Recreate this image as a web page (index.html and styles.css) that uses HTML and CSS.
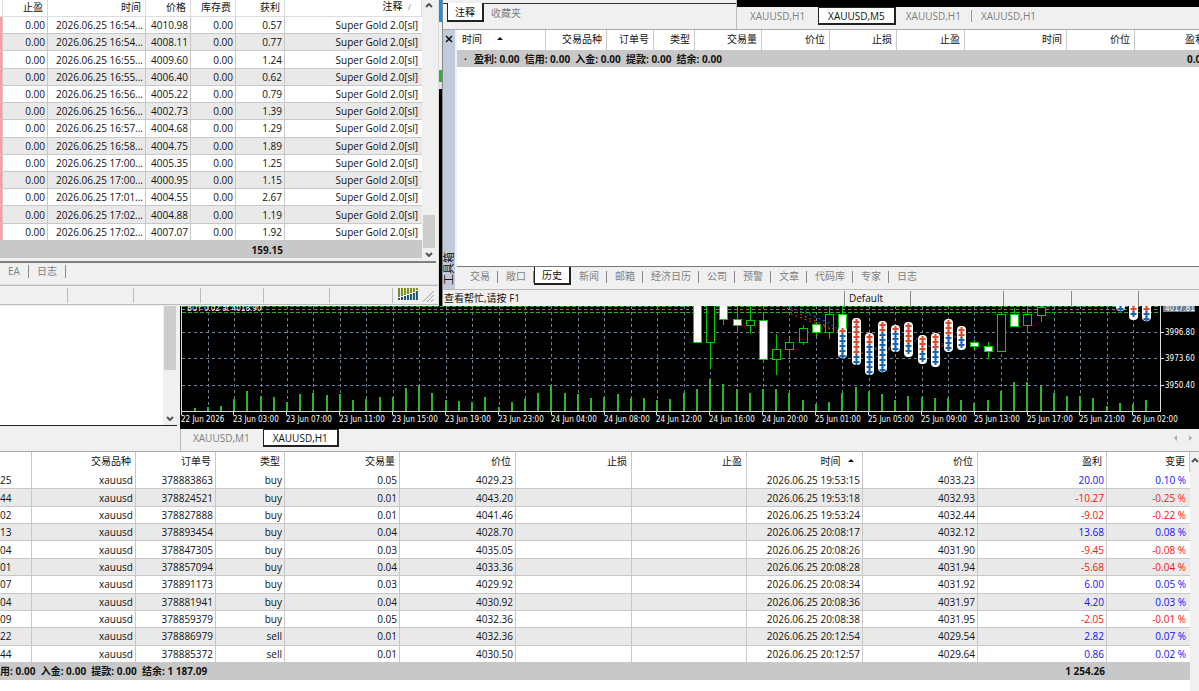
FILE: index.html
```html
<!DOCTYPE html>
<html lang="zh-CN">
<head>
  <meta charset="UTF-8" />
  <meta name="viewport" content="width=device-width, initial-scale=1.0" />
  <title>XAUUSD,H1</title>
  <link rel="stylesheet" href="styles.css">
</head>
<body>
  <div class="windows">
    <section class="report">
      <div class="report-body">
        <table class="grid report-table">
          <colgroup>
            <col class="w-mark"><col class="w-tp"><col class="w-date"><col class="w-price"><col class="w-swap"><col class="w-gain"><col>
          </colgroup>
          <thead>
            <tr><th></th><th>止盈</th><th>时间</th><th>价格</th><th>库存费</th><th>获利</th><th>注释 <span class="sort-mark">∕</span></th></tr>
          </thead>
          <tbody id="deals"></tbody>
          <tfoot>
            <tr><td></td><td></td><td></td><td></td><td></td><td>159.15</td><td></td></tr>
          </tfoot>
        </table>
        <div class="scrollbar">
          <svg class="chevron" viewBox="0 0 8 5"><path d="M1 4 L4 1 L7 4" /></svg>
          <div class="thumb thumb-low"></div>
          <svg class="chevron" viewBox="0 0 8 5"><path d="M1 1 L4 4 L7 1" /></svg>
        </div>
      </div>
      <nav class="tabs report-tabs">
        <button class="tab">EA</button>
        <button class="tab">日志</button>
      </nav>
      <footer class="status report-status">
        <span class="cell s-68"></span><span class="cell s-67"></span><span class="cell s-67"></span><span class="cell s-64"></span><span class="cell s-66"></span><span class="cell s-64"></span>
        <svg class="signal" viewBox="0 0 40 14">
          <path class="sig-a" d="M1 0V9M4 0V8M7 0V7M10 0V6M13 0V5M16 0V4M19 0V2" />
          <path class="sig-b" d="M1 10V12M4 9V12M7 8V12M10 7V12M13 6V12M16 5V12M19 3V12" />
          <path class="grip" d="M25 14L36 3M29 14L36 7M33 14L36 11" />
        </svg>
      </footer>
    </section>

    <div class="seam"></div>

    <section class="terminal">
      <div class="terminal-top">
        <nav class="tabs note-tabs">
          <button class="tab active">注释</button>
          <button class="tab">收藏夹</button>
        </nav>
        <nav class="tabs chart-tabs upper-tabs">
          <button class="tab">XAUUSD,H1</button>
          <button class="tab active">XAUUSD,M5</button>
          <button class="tab">XAUUSD,H1</button>
          <button class="tab">XAUUSD,H1</button>
        </nav>
      </div>
      <div class="toolbox">
        <aside class="toolbox-side">
          <button class="close" aria-label="关闭"><svg viewBox="0 0 8 8"><path d="M1 1 L7 7 M7 1 L1 7" /></svg></button>
          <span class="side-title">工具箱</span>
        </aside>
        <div class="toolbox-main">
          <div class="history">
            <table class="grid history-table">
              <colgroup>
                <col class="w-89"><col class="w-61"><col class="w-47"><col class="w-41"><col class="w-67"><col class="w-68"><col class="w-67"><col class="w-68"><col class="w-102"><col class="w-68"><col>
              </colgroup>
              <thead>
                <tr><th class="left">时间 <span class="arrow arrow-far"></span></th><th>交易品种</th><th>订单号</th><th>类型</th><th>交易量</th><th>价位</th><th>止损</th><th>止盈</th><th>时间</th><th>价位</th><th>盈利</th></tr>
              </thead>
              <tfoot>
                <tr><td class="left" colspan="10"><span class="dot">·</span>盈利: 0.00&nbsp; 信用: 0.00&nbsp; 入金: 0.00&nbsp; 提款: 0.00&nbsp; 结余: 0.00</td><td>0.00</td></tr>
              </tfoot>
            </table>
          </div>
          <nav class="tabs toolbox-tabs">
            <button class="tab">交易</button>
            <button class="tab">敞口</button>
            <button class="tab active">历史</button>
            <button class="tab">新闻</button>
            <button class="tab">邮箱</button>
            <button class="tab">经济日历</button>
            <button class="tab">公司</button>
            <button class="tab">预警</button>
            <button class="tab">文章</button>
            <button class="tab">代码库</button>
            <button class="tab">专家</button>
            <button class="tab">日志</button>
          </nav>
        </div>
      </div>
      <footer class="status terminal-status">
        <span class="cell help">查看帮忙,请按 F1</span><span class="cell s-66">Default</span><span class="cell s-93"></span><span class="cell s-68"></span><span class="cell s-67"></span>
      </footer>
    </section>
  </div>

  <div class="middle">
    <aside class="navigator">
      <div class="navigator-list"></div>
      <div class="scrollbar">
        <div class="thumb thumb-high"></div>
        <svg class="chevron" viewBox="0 0 8 5"><path d="M1 1 L4 4 L7 1" /></svg>
      </div>
    </aside>
    <section class="chart-window">
      <svg id="chart" class="chart" viewBox="180 306 1019 123" preserveAspectRatio="xMinYMin meet"></svg>
      <nav class="tabs chart-tabs lower-tabs">
        <button class="tab">XAUUSD,M1</button>
        <button class="tab active">XAUUSD,H1</button>
        <span class="pager"><i class="prev"></i><i class="next"></i></span>
      </nav>
    </section>
  </div>

  <section class="positions">
    <table class="grid positions-table">
      <colgroup>
        <col class="w-32"><col class="w-104"><col class="w-80"><col class="w-69"><col class="w-115"><col class="w-116"><col class="w-116"><col class="w-115"><col class="w-116"><col class="w-115"><col class="w-129"><col>
      </colgroup>
      <thead>
        <tr><th></th><th>交易品种</th><th>订单号</th><th>类型</th><th>交易量</th><th>价位</th><th>止损</th><th>止盈</th><th>时间 <span class="arrow"></span></th><th>价位</th><th>盈利</th><th>变更</th></tr>
      </thead>
      <tbody id="orders"></tbody>
      <tfoot>
        <tr><td class="left" colspan="10">用: 0.00&nbsp; 入金: 0.00&nbsp; 提款: 0.00&nbsp; 结余: 1 187.09</td><td>1 254.26</td><td></td></tr>
      </tfoot>
    </table>
    <div class="scrollbar">
      <svg class="chevron" viewBox="0 0 8 5"><path d="M1 4 L4 1 L7 4" /></svg>
    </div>
  </section>

  <script src="script.js"></script>
</body>
</html>
```
FILE: styles.css
```css
* {
  box-sizing: border-box;
}
body {
  margin: 0;
  min-height: 100vh;
  display: flex;
  flex-direction: column;
  overflow: hidden;
  background: #f0f0f0;
  color: #111;
  font-family: "Open Sans", "Noto Sans CJK SC", sans-serif;
  font-size: 10px;
  line-height: 14px;
}
button {
  font: inherit;
  color: inherit;
  border: 0;
  padding: 0;
  background: none;
}

/* tables */
.grid {
  width: 100%;
  table-layout: fixed;
  border-collapse: separate;
  border-spacing: 0;
  background: #fff;
}
.grid th,
.grid td {
  padding: 0 2px 0 0;
  line-height: 14px;
  text-align: right;
  white-space: nowrap;
  overflow: hidden;
  border-right: 1px solid #c8c8c8;
}
.grid th {
  padding: 0 4px 2px 0;
  font-weight: normal;
}
.grid tbody td {
  border-bottom: 1px solid #c8c8c8;
}
.grid tbody tr:nth-child(even) {
  background: #e9e9e9;
}
.grid tfoot td {
  background: #c8c8c8;
  font-weight: bold;
  height: 17px;
}
.grid .left {
  text-align: left;
}
.grid td.plus {
  color: #1010ff;
}
.grid td.minus {
  color: #ff1010;
}
.arrow {
  display: inline-block;
  margin: 0 4px 3px 5px;
  border: 3px solid transparent;
  border-top: 0;
  border-bottom-color: #111;
}
.arrow-far {
  margin-left: 12px;
}
.w-mark { width: 3px; }
.w-tp { width: 45px; }
.w-date { width: 98px; }
.w-price { width: 45px; }
.w-swap { width: 45px; }
.w-gain { width: 49px; }
.w-32 { width: 32px; }
.w-41 { width: 41px; }
.w-47 { width: 47px; }
.w-61 { width: 61px; }
.w-67 { width: 67px; }
.w-68 { width: 68px; }
.w-69 { width: 69px; }
.w-80 { width: 80px; }
.w-89 { width: 89px; }
.w-102 { width: 102px; }
.w-104 { width: 104px; }
.w-115 { width: 115px; }
.w-116 { width: 116px; }
.w-129 { width: 129px; }

/* scrollbars */
.scrollbar {
  display: flex;
  flex-direction: column;
  align-items: center;
  background: #f0f0f0;
}
.chevron {
  width: 8px;
  height: 5px;
  fill: none;
  stroke: #555;
  stroke-width: 2;
}
.thumb {
  width: 12px;
  background: #cdcdcd;
}
.thumb-low {
  height: 33px;
  margin: auto 0 4px;
}
.thumb-high {
  height: 64px;
  margin-bottom: auto;
}

/* tabs */
.tabs {
  display: flex;
  align-items: flex-start;
  color: #808080;
}
.tab {
  position: relative;
  height: 18px;
  line-height: 16px;
  white-space: nowrap;
}
.tab.active {
  background: #fff;
  color: #111;
  border: 1px solid #222;
  border-width: 0 2px 2px 1px;
}

/* status bars */
.status {
  display: flex;
  height: 18px;
  padding-top: 2px;
  border-top: 1px solid #bbb;
}
.cell {
  height: 15px;
  padding-left: 4px;
  border-right: 1px solid #a8a8a8;
}
.s-64 { width: 64px; }
.s-66 { width: 66px; }
.s-67 { width: 67px; }
.s-68 { width: 68px; }
.s-93 { width: 93px; }

/* upper windows */
.windows {
  display: flex;
  height: 306px;
}
.report {
  width: 439px;
  height: 305px;
  display: flex;
  flex-direction: column;
  border-right: 1px solid #ddd;
  border-bottom: 1px solid #bbb;
}
.report-body {
  display: flex;
  height: 263px;
  padding-bottom: 3px;
  margin-right: 2px;
  border-bottom: 2px solid #808080;
}
.report-table {
  width: 422px;
  height: 258px;
}
.report-table thead th {
  height: 16px;
  line-height: 12px;
  padding-bottom: 3px;
  border-right-color: #ddd;
  border-bottom: 1px solid #ddd;
}
.report-table tbody td:first-child {
  background: #ff9c9c;
  border-bottom-color: #f5b5b5;
}
.report-table td:last-child,
.report-table tfoot td {
  border-right: 0;
}
.report-table td:last-child {
  padding-right: 4px;
}
.sort-mark {
  margin: 0 6px 0 3px;
  color: #888;
  font-size: 8px;
}
.report-body .scrollbar {
  flex: 1;
  padding: 3px 0 1px;
}
.report-tabs {
  height: 22px;
  border-bottom: 1px solid #ddd;
}
.report-tabs .tab {
  height: 13px;
  line-height: 13px;
  margin-top: 2px;
  padding: 0 8px;
  border-right: 1px solid #888;
}
.report-status .cell {
  border-right-color: #bbb;
}
.signal {
  width: 40px;
  height: 14px;
  margin-left: 5px;
  stroke-width: 2;
}
.sig-a {
  stroke: #7c8c18;
}
.sig-b {
  stroke: #17526f;
}
.grip {
  stroke: #999;
  stroke-width: 1;
}
.seam {
  width: 4px;
  border-right: 1px solid #888;
  background: linear-gradient(#0a94ef 0 22px, #f0f0f0 22px 70px, #28b428 70px 82px, #e0e0e0 82px 89px, #000 89px);
}
.terminal {
  flex: 1;
  min-width: 0;
  display: flex;
  flex-direction: column;
}
.terminal-top {
  display: flex;
  height: 29px;
}
.note-tabs {
  width: 294px;
  padding: 3px 0 0 4px;
  border-right: 1px solid #bbb;
  background: linear-gradient(#f0f0f0 3px, #333 3px 4px, #f0f0f0 4px);
}
.note-tabs .tab {
  height: 19px;
  line-height: 18px;
  padding: 0 7px;
}
.upper-tabs {
  flex: 1;
  border-top: 7px solid #000;
}
.chart-tabs .tab {
  padding: 0 13px;
}
.chart-tabs .tab.active {
  line-height: 14px;
  padding: 0 9px;
  border-top-width: 1px;
}
.upper-tabs .tab:last-child::before {
  content: "";
  position: absolute;
  left: 0;
  top: 3px;
  height: 12px;
  border-left: 1px solid #999;
}
.upper-tabs .tab:nth-child(3) {
  padding-left: 10px;
  padding-right: 10px;
}
.upper-tabs .tab:last-child {
  padding-left: 10px;
}
.toolbox {
  flex: 1;
  display: flex;
  border-top: 1px solid #aaa;
}
.toolbox-side {
  width: 12px;
  display: flex;
  flex-direction: column;
  align-items: center;
  justify-content: space-between;
  padding: 5px 0 4px;
  background: #bfcbdb;
}
.close {
  width: 8px;
  height: 8px;
  display: flex;
}
.close svg {
  width: 8px;
  stroke: #111;
  stroke-width: 1.5;
}
.side-title {
  writing-mode: sideways-lr;
  line-height: 12px;
  font-size: 11px;
}
.toolbox-main {
  flex: 1;
  min-width: 0;
  display: flex;
  flex-direction: column;
  margin-left: 2px;
}
.history {
  flex: 1;
  overflow: hidden;
  background: #fff;
  border-bottom: 1px solid #777;
}
.history-table {
  width: calc(100% + 11px);
}
.history-table th {
  height: 20px;
}
.history-table th.left {
  padding-left: 5px;
}
.dot {
  display: inline-block;
  width: 17px;
  text-align: center;
}
.toolbox-tabs {
  height: 22px;
  padding-left: 5px;
}
.toolbox-tabs .tab {
  padding: 0 8px;
}
.toolbox-tabs .tab.active {
  padding: 0 7px;
}
.toolbox-tabs .tab::after {
  content: "";
  position: absolute;
  right: 0;
  top: 4px;
  height: 12px;
  border-right: 1px solid #888;
}
.toolbox-tabs .tab.active::after,
.toolbox-tabs .tab:last-child::after {
  display: none;
}
.terminal-status {
  height: 17px;
  padding-top: 1px;
}
.terminal-status .cell {
  border-right-color: #888;
}
.terminal-status .help {
  width: 402px;
  padding-left: 1px;
}

/* navigator and chart */
.middle {
  display: flex;
  height: 145px;
}
.navigator {
  width: 177px;
  height: 120px;
  display: flex;
  background: #fff;
  border-bottom: 1px solid #222;
}
.navigator-list {
  flex: 1;
}
.navigator .scrollbar {
  width: 14px;
  padding-bottom: 4px;
}
.chart-window {
  flex: 1;
  min-width: 0;
  margin-left: 3px;
  display: flex;
  flex-direction: column;
  background: #000;
}
.chart {
  display: block;
  width: 100%;
  height: 123px;
}
.chart text {
  font-family: "DejaVu Sans Condensed", "Open Sans", sans-serif;
  font-size: 8px;
  fill: #fff;
}
.gridline {
  stroke: #708296;
  stroke-dasharray: 3 3;
}
.axis {
  stroke: #ddd;
}
.level {
  stroke: #22b422;
  stroke-dasharray: 4 2;
}
.volume {
  fill: #2ab82a;
}
.wick {
  stroke: #00c800;
}
.candle {
  fill: #000;
  stroke: #00d000;
}
.candle.down {
  fill: #fff;
}
.deal-line {
  fill: none;
  stroke-dasharray: 2 3;
}
.pill {
  fill: #fff;
}
.sell {
  stroke: #e04a28;
}
.buy {
  stroke: #1464b4;
}
.mark {
  stroke-width: 2;
}
.price-tag {
  fill: #708090;
}
.lower-tabs {
  height: 22px;
  background: #f0f0f0;
  border-left: 1px solid #bbb;
}
.lower-tabs .tab {
  padding-left: 12px;
}
.pager {
  display: flex;
  gap: 12px;
  margin: 6px 4px 0 auto;
}
.pager i {
  border: 3px solid transparent;
}
.pager .prev {
  border-right-color: #aaa;
}
.pager .next {
  border-left-color: #aaa;
}

/* open positions */
.positions {
  flex: 1;
  display: flex;
  align-items: flex-start;
  background: #fff;
  border-top: 1px solid #aaa;
}
.positions-table {
  flex: 1;
  height: 228px;
}
.positions-table th {
  height: 20px;
}
.positions-table td:last-child {
  padding-right: 4px;
  border-right: 0;
}
.positions-table tbody td:first-child {
  text-align: left;
}
.positions-table tfoot td {
  padding-bottom: 2px;
  border-right: 0;
}
.positions .scrollbar {
  width: 9px;
  align-self: stretch;
  padding-top: 6px;
}
```
FILE: script.js
```js
const deals = [
  ['16:54', '4010.98', '0.57'],
  ['16:54', '4008.11', '0.77'],
  ['16:55', '4009.60', '1.24'],
  ['16:55', '4006.40', '0.62'],
  ['16:56', '4005.22', '0.79'],
  ['16:56', '4002.73', '1.39'],
  ['16:57', '4004.68', '1.29'],
  ['16:58', '4004.75', '1.89'],
  ['17:00', '4005.35', '1.25'],
  ['17:00', '4000.95', '1.15'],
  ['17:01', '4004.55', '2.67'],
  ['17:02', '4004.88', '1.19'],
  ['17:02', '4007.07', '1.92']
];

const orders = [
  ['25', '378883863', 'buy', '0.05', '4029.23', '19:53:15', '4033.23', '20.00', '0.10'],
  ['44', '378824521', 'buy', '0.01', '4043.20', '19:53:18', '4032.93', '-10.27', '-0.25'],
  ['02', '378827888', 'buy', '0.01', '4041.46', '19:53:24', '4032.44', '-9.02', '-0.22'],
  ['13', '378893454', 'buy', '0.04', '4028.70', '20:08:17', '4032.12', '13.68', '0.08'],
  ['04', '378847305', 'buy', '0.03', '4035.05', '20:08:26', '4031.90', '-9.45', '-0.08'],
  ['01', '378857094', 'buy', '0.04', '4033.36', '20:08:28', '4031.94', '-5.68', '-0.04'],
  ['07', '378891173', 'buy', '0.03', '4029.92', '20:08:34', '4031.92', '6.00', '0.05'],
  ['04', '378881941', 'buy', '0.04', '4030.92', '20:08:36', '4031.97', '4.20', '0.03'],
  ['09', '378859379', 'buy', '0.05', '4032.36', '20:08:38', '4031.95', '-2.05', '-0.01'],
  ['22', '378886979', 'sell', '0.01', '4032.36', '20:12:54', '4029.54', '2.82', '0.07'],
  ['44', '378885372', 'sell', '0.01', '4030.50', '20:12:57', '4029.64', '0.86', '0.02']
];

document.getElementById('deals').innerHTML = deals.map(([time, price, profit]) =>
  `<tr><td></td><td>0.00</td><td>2026.06.25 ${time}...</td><td>${price}</td><td>0.00</td><td>${profit}</td><td>Super Gold 2.0[sl]</td></tr>`
).join('');

document.getElementById('orders').innerHTML = orders.map(o => {
  const sign = o[7].startsWith('-') ? 'minus' : 'plus';
  return `<tr><td>${o[0]}</td><td>xauusd</td><td>${o[1]}</td><td>${o[2]}</td><td>${o[3]}</td><td>${o[4]}</td><td></td><td></td>` +
    `<td>2026.06.25 ${o[5]}</td><td>${o[6]}</td><td class="${sign}">${o[7]}</td><td class="${sign}">${o[8]} %</td></tr>`;
}).join('');

// chart
const step = 13.22;
const base = 411;
const barX = i => Math.floor(195 + step * i);

const volumes = [
  3, 4, 5, 12, 20, 15, 14, 9, 17, 18, 16, 17, 11, 12, 14, 14, 23, 25, 18, 11, 10, 9, 14, 4, 9,
  12, 18, 25, 18, 17, 13, 14, 17, 13, 13, 11, 12, 18, 22, 32, 27, 22, 18, 22, 22, 18, 11, 7, 9, 18,
  24, 20, 17, 11, 15, 14, 13, 13, 11, 8, 11, 20, 29, 29, 25, 18, 15, 15, 13, 5, 8, 7, 11
];

// bar, high, body top, body bottom, low, falling
const candles = [
  [38, 300, 300, 342, 342, 1], [39, 300, 300, 342, 369, 0], [40, 300, 300, 319, 325, 1],
  [41, 309, 319, 325, 332, 1], [42, 300, 320, 325, 334, 0], [43, 315, 320, 359, 359, 1],
  [44, 334, 349, 359, 375, 0], [45, 339, 342, 349, 359, 0], [46, 325, 328, 342, 345, 0],
  [47, 322, 324, 332, 336, 1], [48, 305, 314, 332, 339, 0], [49, 305, 314, 337, 340, 1],
  [50, 330, 338, 356, 360, 0], [51, 340, 348, 356, 360, 0], [52, 330, 333, 347, 360, 0],
  [53, 330, 334, 338, 345, 1], [54, 330, 334, 344, 350, 1], [55, 340, 343, 354, 358, 0],
  [56, 340, 343, 354, 358, 0], [57, 335, 340, 341, 345, 0], [59, 340, 342, 346, 350, 1],
  [60, 342, 346, 351, 359, 1], [61, 312, 314, 351, 351, 0], [62, 308, 314, 326, 327, 1],
  [63, 300, 314, 325, 331, 0], [64, 300, 307, 315, 322, 0]
];

// bar, top, bottom, where selling turns to buying
const stacks = [
  [49, 327, 358, 335], [50, 318, 365, 354], [51, 333, 375, 345], [52, 321, 372, 333],
  [53, 325, 352, 334], [54, 322, 357, 342], [55, 335, 364, 350], [56, 333, 367, 349],
  [57, 319, 352, 338], [58, 326, 350, 337], [70, 300, 311, 300], [71, 300, 320, 312], [72, 300, 321, 312]
];

const dates = [
  '22 Jun 2026', '23 Jun 03:00', '23 Jun 07:00', '23 Jun 11:00', '23 Jun 15:00', '23 Jun 19:00', '23 Jun 23:00',
  '24 Jun 04:00', '24 Jun 08:00', '24 Jun 12:00', '24 Jun 16:00', '24 Jun 20:00', '25 Jun 01:00', '25 Jun 05:00',
  '25 Jun 09:00', '25 Jun 13:00', '25 Jun 17:00', '25 Jun 21:00', '26 Jun 02:00'
];

const line = (cls, x1, y1, x2, y2) => `<line class="${cls}" x1="${x1}" y1="${y1}" x2="${x2}" y2="${y2}" />`;
let out = '';

for (let i = 1; i < 73; i += 2) {
  out += line('gridline', barX(i) + 0.5, 306, barX(i) + 0.5, base);
}
[309, 332, 358, 385].forEach(y => { out += line('gridline', 182, y + 0.5, 1161, y + 0.5); });
out += line('level', 182, 306.5, 1161, 306.5) + line('level', 182, 312.5, 1161, 312.5);
out += '<text x="187" y="311">BUY 0.02 at 4018.90</text>';

volumes.forEach((v, i) => {
  out += `<rect class="volume" x="${barX(i) - 1}" y="${base - v}" width="2" height="${v}" />`;
});

candles.forEach(([i, high, top, bottom, low, down]) => {
  const x = barX(i) + 0.5;
  out += line('wick', x, high, x, low);
  out += `<rect class="candle ${down ? 'down' : ''}" x="${x - 4}" y="${top + 0.5}" width="8" height="${bottom - top}" />`;
});

out += '<path class="deal-line sell" d="M782 306L838 331M786 312L846 335M856 352L880 357L908 334L936 350L962 332M870 350L895 346M884 358L896 335" />';
out += '<path class="deal-line buy" d="M786 306L842 327M796 306L842 331M870 350L884 345L896 334L934 348L961 334" />';

stacks.forEach(([i, top, bottom, turn]) => {
  const x = barX(i) + 0.5;
  out += `<rect class="pill" x="${x - 4.5}" y="${top}" width="9" height="${bottom - top}" rx="4" />`;
  for (let y = top + 4; y < bottom - 1; y += 5) {
    out += `<path class="mark ${y < turn ? 'sell' : 'buy'}" d="M${x - 3} ${y}H${x + 3}M${x} ${y - 3}V${y + 3}" />`;
  }
});

out += line('axis', 181.5, 306, 181.5, base) + line('axis', 181, base + 0.5, 1161, base + 0.5) + line('axis', 1160.5, 306, 1160.5, base);
dates.forEach((label, i) => {
  const x = Math.floor(182 + step * 4 * i);
  out += line('axis', x - 0.5, base, x - 0.5, base + 4);
  out += `<text x="${x - 1}" y="422">${label}</text>`;
});

out += '<rect class="price-tag" x="1163" y="306" width="32" height="6" /><text x="1165" y="311">4017.81</text>';
[['3996.80', 332], ['3973.60', 358], ['3950.40', 385]].forEach(([label, y]) => {
  out += line('axis', 1161, y + 0.5, 1164, y + 0.5) + `<text x="1165" y="${y + 3}">${label}</text>`;
});

document.getElementById('chart').innerHTML = out;
```
